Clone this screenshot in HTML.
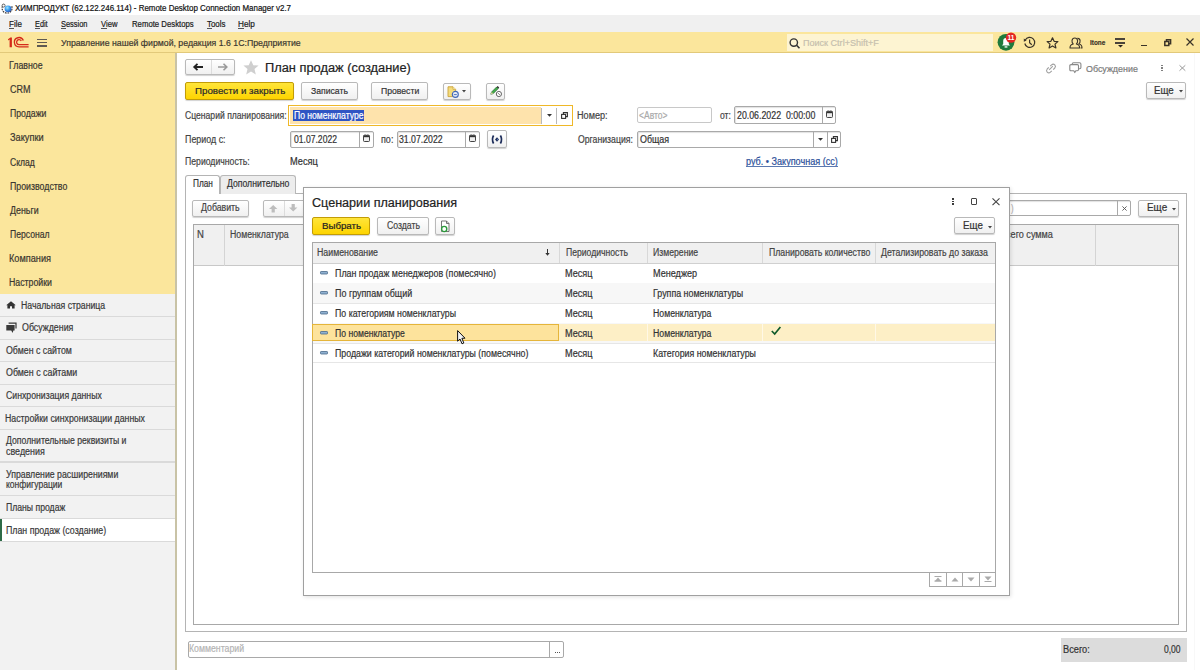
<!DOCTYPE html>
<html><head><meta charset="utf-8">
<style>
*{box-sizing:border-box;margin:0;padding:0}
html,body{width:1200px;height:670px;overflow:hidden;background:#fff;font-family:"Liberation Sans",sans-serif;color:#333}
.a{position:absolute;white-space:nowrap;transform-origin:0 0}
.tx{-webkit-text-stroke:0.2px currentColor;white-space:pre}
svg.a{overflow:visible}
</style></head><body>
<div class="a" style="left:0px;top:0px;width:1200px;height:15px;background:#fff"></div>
<svg class="a" style="left:1px;top:1.5px" width="12" height="12" viewBox="0 0 12 12"><defs><radialGradient id="gb" cx="0.4" cy="0.35" r="0.7"><stop offset="0" stop-color="#9ee8ff"/><stop offset="0.5" stop-color="#3a9ef0"/><stop offset="1" stop-color="#2b4fb8"/></radialGradient></defs><path d="M3 2.2 A5 5 0 1 0 10.6 4" fill="none" stroke="#3a3a3a" stroke-width="1.2" stroke-dasharray="1.6 0.9"/><circle cx="2.6" cy="3.6" r="1.5" fill="#fff" stroke="#444" stroke-width="0.8"/><circle cx="7" cy="6.8" r="3.4" fill="url(#gb)"/></svg>
<div class="a tx" style="left:15.00px;top:4.42px;font-size:8.6px;line-height:8.6px;color:#111;font-weight:400;transform:scaleX(0.9245);">ХИМПРОДУКТ (62.122.246.114) - Remote Desktop Connection Manager v2.7</div>
<div class="a" style="left:0px;top:15px;width:1200px;height:17px;background:#f0f0f0"></div>
<div class="a tx" style="left:9.40px;top:19.68px;font-size:9px;line-height:9px;color:#1a1a1a;font-weight:400;transform:scaleX(0.8929);">File</div>
<div class="a tx" style="left:35.00px;top:19.68px;font-size:9px;line-height:9px;color:#1a1a1a;font-weight:400;transform:scaleX(0.8125);">Edit</div>
<div class="a tx" style="left:61.00px;top:19.68px;font-size:9px;line-height:9px;color:#1a1a1a;font-weight:400;transform:scaleX(0.8281);">Session</div>
<div class="a tx" style="left:101.00px;top:19.68px;font-size:9px;line-height:9px;color:#1a1a1a;font-weight:400;transform:scaleX(0.8500);">View</div>
<div class="a tx" style="left:131.70px;top:19.68px;font-size:9px;line-height:9px;color:#1a1a1a;font-weight:400;transform:scaleX(0.8625);">Remote Desktops</div>
<div class="a tx" style="left:207.00px;top:19.68px;font-size:9px;line-height:9px;color:#1a1a1a;font-weight:400;transform:scaleX(0.8762);">Tools</div>
<div class="a tx" style="left:238.40px;top:19.68px;font-size:9px;line-height:9px;color:#1a1a1a;font-weight:400;transform:scaleX(0.9105);">Help</div>
<div class="a" style="left:9.4px;top:27.6px;width:4.5px;height:0.6999999999999993px;background:#555"></div>
<div class="a" style="left:35px;top:27.6px;width:4.5px;height:0.6999999999999993px;background:#555"></div>
<div class="a" style="left:61px;top:27.6px;width:4.799999999999997px;height:0.6999999999999993px;background:#555"></div>
<div class="a" style="left:101px;top:27.6px;width:5.799999999999997px;height:0.6999999999999993px;background:#555"></div>
<div class="a" style="left:207px;top:27.6px;width:5px;height:0.6999999999999993px;background:#555"></div>
<div class="a" style="left:238.4px;top:27.6px;width:5.5px;height:0.6999999999999993px;background:#555"></div>
<div class="a" style="left:0px;top:32px;width:1200px;height:19.5px;background:#fbe69c"></div>
<div class="a" style="left:0px;top:51.5px;width:1200px;height:1.5px;background:#e2c97a"></div>
<svg class="a" style="left:7px;top:36px" width="23" height="12" viewBox="0 0 23 12"><path d="M2.6 11.2 L2.6 3.4 L1.2 4.4 L1 3.2 L3.4 1.4 L4.9 1.4 L4.9 11.2 Z" fill="#d42a1a"/><path d="M16.3 4.6 A4.6 4.6 0 1 0 12 10.8 L21.6 10.8" fill="none" stroke="#d42a1a" stroke-width="1.35"/><path d="M14.3 5.0 A2.5 2.5 0 1 0 12 8.7 L21.6 8.7" fill="none" stroke="#d42a1a" stroke-width="1.25"/></svg>
<div class="a" style="left:37.3px;top:38.6px;width:9.700000000000003px;height:1.2999999999999972px;background:#5f5a52"></div>
<div class="a" style="left:37.3px;top:42.1px;width:9.700000000000003px;height:1.2999999999999972px;background:#5f5a52"></div>
<div class="a" style="left:37.3px;top:45.4px;width:9.700000000000003px;height:1.2999999999999972px;background:#5f5a52"></div>
<div class="a tx" style="left:60.80px;top:38.17px;font-size:9.6px;line-height:9.6px;color:#3a3630;font-weight:400;transform:scaleX(0.9106);">Управление нашей фирмой, редакция 1.6 1С:Предприятие</div>
<div class="a" style="left:787.3px;top:33.6px;width:205.5px;height:17.6px;background:#fdf4d2"></div>
<svg class="a" style="left:789px;top:37.5px" width="12" height="11" viewBox="0 0 12 11"><circle cx="4.8" cy="4.6" r="3.7" fill="none" stroke="#333" stroke-width="1.4"/><path d="M7.6 7.3 L10.5 10.2" stroke="#333" stroke-width="1.6"/></svg>
<div class="a tx" style="left:803.00px;top:38.26px;font-size:9.5px;line-height:9.5px;color:#c6bfae;font-weight:400;transform:scaleX(0.9519);">Поиск Ctrl+Shift+F</div>
<svg class="a" style="left:996px;top:32px" width="24" height="20" viewBox="0 0 24 20"><circle cx="10" cy="10.3" r="8.4" fill="#1f7a3c"/><path d="M6 13.5 L7.2 12 L7.2 9 Q7.2 6.2 10 6 Q12.8 6.2 12.8 9 L12.8 12 L14 13.5 Z" fill="#fff"/><rect x="8.6" y="14.3" width="2.8" height="1.3" fill="#fff"/><circle cx="15" cy="5.6" r="5.2" fill="#e32622"/><text x="15" y="7.9" font-family="Liberation Sans" font-weight="700" font-size="6.5" fill="#fff" text-anchor="middle">11</text></svg>
<svg class="a" style="left:1023px;top:36px" width="13" height="13" viewBox="0 0 13 13"><path d="M2.3 4 A5 5 0 1 1 1.8 7.5" fill="none" stroke="#3a3328" stroke-width="1.2"/><path d="M0.8 2.5 L3.6 4.6 L0.8 5.8 Z" fill="#3a3328"/><path d="M6.6 3.5 L6.6 6.8 L8.8 8.8" fill="none" stroke="#3a3328" stroke-width="1.2"/></svg>
<svg class="a" style="left:1046px;top:36.5px" width="13" height="12" viewBox="0 0 13 12"><path d="M6.5 0.8 L8.1 4.3 L11.9 4.6 L9 7.1 L9.9 10.9 L6.5 8.9 L3.1 10.9 L4 7.1 L1.1 4.6 L4.9 4.3 Z" fill="none" stroke="#3a3328" stroke-width="1.2" stroke-linejoin="round"/></svg>
<svg class="a" style="left:1069px;top:36.5px" width="14" height="12" viewBox="0 0 14 12"><path d="M1 11 Q1 7.5 4.2 7 Q2.8 5.6 3 3.6 Q3.4 1 5.8 1 Q8.2 1 8.6 3.6 Q8.8 5.6 7.4 7 Q10.6 7.5 10.6 11 Z" fill="none" stroke="#3a3328" stroke-width="1.1" stroke-linejoin="round"/><path d="M8.4 1.4 Q10.8 1.2 11.1 3.6 Q11.3 5.6 9.9 7 Q13 7.5 13 11 L11.6 11" fill="none" stroke="#3a3328" stroke-width="1.1" stroke-linejoin="round"/></svg>
<div class="a tx" style="left:1090.30px;top:39.45px;font-size:7.5px;line-height:7.5px;color:#3a3328;font-weight:700;transform:scaleX(0.8500);">Itone</div>
<div class="a" style="left:1115.2px;top:38.4px;width:10.099999999999909px;height:1.4000000000000057px;background:#4a443a"></div>
<div class="a" style="left:1115.2px;top:42.199999999999996px;width:10.099999999999909px;height:1.4000000000000057px;background:#4a443a"></div>
<svg class="a" style="left:1118px;top:45.3px" width="5" height="3" viewBox="0 0 5 3"><path d="M0 0 L5 0 L2.5 2.6 Z" fill="#2a2520"/></svg>
<div class="a" style="left:1140.6px;top:44.6px;width:6.2000000000000455px;height:1.3999999999999986px;background:#3a3328"></div>
<svg class="a" style="left:1163.8px;top:38.9px" width="7.4" height="7.2" viewBox="0 0 7.4 7.2"><rect x="0.8" y="2.5" width="4" height="4" fill="none" stroke="#3a3328" stroke-width="1.5"/><path d="M2.5 2.5 L2.5 0.8 L6.6 0.8 L6.6 4.8 L4.8 4.8" fill="none" stroke="#3a3328" stroke-width="1.5"/></svg>
<svg class="a" style="left:1186px;top:38.3px" width="8" height="8" viewBox="0 0 8 8"><path d="M0.5 0.5 L7.5 7.5 M7.5 0.5 L0.5 7.5" stroke="#3a3328" stroke-width="1.2"/></svg>
<div class="a" style="left:0px;top:53px;width:175px;height:240.5px;background:#fbe69c"></div>
<div class="a" style="left:0px;top:293.5px;width:175px;height:376.5px;background:#f2f2f2"></div>
<div class="a" style="left:175px;top:53px;width:2px;height:617px;background:#c9c3a6"></div>
<div class="a tx" style="left:9.22px;top:61.23px;font-size:10px;line-height:10px;color:#3a3630;font-weight:400;transform:scaleX(0.8811);">Главное</div>
<div class="a tx" style="left:10.10px;top:85.23px;font-size:10px;line-height:10px;color:#3a3630;font-weight:400;transform:scaleX(0.9000);">CRM</div>
<div class="a tx" style="left:10.10px;top:109.44px;font-size:10px;line-height:10px;color:#3a3630;font-weight:400;transform:scaleX(0.8714);">Продажи</div>
<div class="a tx" style="left:10.10px;top:133.44px;font-size:10px;line-height:10px;color:#3a3630;font-weight:400;transform:scaleX(0.9222);">Закупки</div>
<div class="a tx" style="left:10.10px;top:157.53px;font-size:10px;line-height:10px;color:#3a3630;font-weight:400;transform:scaleX(0.8586);">Склад</div>
<div class="a tx" style="left:10.10px;top:181.53px;font-size:10px;line-height:10px;color:#3a3630;font-weight:400;transform:scaleX(0.8785);">Производство</div>
<div class="a tx" style="left:10.10px;top:205.53px;font-size:10px;line-height:10px;color:#3a3630;font-weight:400;transform:scaleX(0.8844);">Деньги</div>
<div class="a tx" style="left:10.10px;top:229.53px;font-size:10px;line-height:10px;color:#3a3630;font-weight:400;transform:scaleX(0.8630);">Персонал</div>
<div class="a tx" style="left:9.18px;top:253.53px;font-size:10px;line-height:10px;color:#3a3630;font-weight:400;transform:scaleX(0.9182);">Компания</div>
<div class="a tx" style="left:9.22px;top:277.54px;font-size:10px;line-height:10px;color:#3a3630;font-weight:400;transform:scaleX(0.8771);">Настройки</div>
<div class="a" style="left:0px;top:315.7px;width:175px;height:1.1999999999999886px;background:#dadada"></div>
<div class="a" style="left:0px;top:339.0px;width:175px;height:1.1999999999999886px;background:#dadada"></div>
<div class="a" style="left:0px;top:360.7px;width:175px;height:1.1999999999999886px;background:#dadada"></div>
<div class="a" style="left:0px;top:384.2px;width:175px;height:1.1999999999999886px;background:#dadada"></div>
<div class="a" style="left:0px;top:406.0px;width:175px;height:1.1999999999999886px;background:#dadada"></div>
<div class="a" style="left:0px;top:428.8px;width:175px;height:1.1999999999999886px;background:#dadada"></div>
<div class="a" style="left:0px;top:461.4px;width:175px;height:1.1999999999999886px;background:#dadada"></div>
<div class="a" style="left:0px;top:495.3px;width:175px;height:1.1999999999999886px;background:#dadada"></div>
<div class="a" style="left:0px;top:518.2px;width:175px;height:1.2000000000000455px;background:#dadada"></div>
<div class="a" style="left:0px;top:540.7px;width:175px;height:1.2000000000000455px;background:#dadada"></div>
<div class="a" style="left:0px;top:519.3px;width:175px;height:21.40000000000009px;background:#fff"></div>
<div class="a" style="left:0px;top:519.3px;width:2px;height:21.40000000000009px;background:#2e6b48"></div>
<svg class="a" style="left:6.2px;top:300.6px" width="10" height="8" viewBox="0 0 10 8"><path d="M0.2 4.2 L5 0.2 L9.8 4.2 L8.6 4.2 L8.6 7.6 L6 7.6 L6 5.2 L4 5.2 L4 7.6 L1.4 7.6 L1.4 4.2 Z" fill="#333"/></svg>
<svg class="a" style="left:6px;top:321.5px" width="11" height="12" viewBox="0 0 11 12"><path d="M2.6 0.6 L10.6 0.6 L10.6 6.6 L9.4 6.6 L9.4 1.8 L2.6 1.8 Z" fill="#3a3a3a"/><path d="M0.3 3.0 L8.6 3.0 L8.6 8.4 L7.4 8.4 L6.6 11.0 L5.2 8.4 L0.3 8.4 Z" fill="#3a3a3a"/></svg>
<div class="a tx" style="left:21.33px;top:301.24px;font-size:10px;line-height:10px;color:#3a3a3a;font-weight:400;transform:scaleX(0.8698);">Начальная страница</div>
<div class="a tx" style="left:22.20px;top:323.24px;font-size:10px;line-height:10px;color:#3a3a3a;font-weight:400;transform:scaleX(0.8845);">Обсуждения</div>
<div class="a tx" style="left:6.30px;top:345.74px;font-size:10px;line-height:10px;color:#3a3a3a;font-weight:400;transform:scaleX(0.8800);">Обмен с сайтом</div>
<div class="a tx" style="left:6.30px;top:368.24px;font-size:10px;line-height:10px;color:#3a3a3a;font-weight:400;transform:scaleX(0.8863);">Обмен с сайтами</div>
<div class="a tx" style="left:6.30px;top:391.04px;font-size:10px;line-height:10px;color:#3a3a3a;font-weight:400;transform:scaleX(0.8718);">Синхронизация данных</div>
<div class="a tx" style="left:5.42px;top:413.54px;font-size:10px;line-height:10px;color:#3a3a3a;font-weight:400;transform:scaleX(0.8767);">Настройки синхронизации данных</div>
<div class="a tx" style="left:6.30px;top:436.34px;font-size:10px;line-height:10px;color:#3a3a3a;font-weight:400;transform:scaleX(0.8688);">Дополнительные реквизиты и</div>
<div class="a tx" style="left:6.30px;top:446.64px;font-size:10px;line-height:10px;color:#3a3a3a;font-weight:400;transform:scaleX(0.8930);">сведения</div>
<div class="a tx" style="left:6.30px;top:469.84px;font-size:10px;line-height:10px;color:#3a3a3a;font-weight:400;transform:scaleX(0.8758);">Управление расширениями</div>
<div class="a tx" style="left:6.30px;top:480.34px;font-size:10px;line-height:10px;color:#3a3a3a;font-weight:400;transform:scaleX(0.8545);">конфигурации</div>
<div class="a tx" style="left:6.30px;top:502.84px;font-size:10px;line-height:10px;color:#3a3a3a;font-weight:400;transform:scaleX(0.8652);">Планы продаж</div>
<div class="a tx" style="left:6.30px;top:525.74px;font-size:10px;line-height:10px;color:#3a3a3a;font-weight:400;transform:scaleX(0.8807);">План продаж (создание)</div>
<div class="a" style="left:184.8px;top:59.2px;width:49.79999999999998px;height:15.599999999999994px;border:1px solid #b9b9b9;border-radius:2px;background:linear-gradient(#ffffff,#f0f0f0);box-shadow:0 1px 1px rgba(0,0,0,.18)"></div>
<div class="a" style="left:211px;top:60px;width:1px;height:14px;background:#dcdcdc"></div>
<svg class="a" style="left:193px;top:63px" width="11" height="8" viewBox="0 0 11 8"><path d="M10 4 L1.5 4 M4.5 0.8 L1.2 4 L4.5 7.2" fill="none" stroke="#222" stroke-width="1.8"/></svg>
<svg class="a" style="left:217px;top:63px" width="11" height="8" viewBox="0 0 11 8"><path d="M1 4 L9.5 4 M6.5 0.8 L9.8 4 L6.5 7.2" fill="none" stroke="#9a9a9a" stroke-width="1.6"/></svg>
<svg class="a" style="left:242.5px;top:59.5px" width="16" height="15" viewBox="0 0 16 15"><path d="M8 0.3 L10.3 5.2 L15.6 5.6 L11.5 9 L12.8 14.6 L8 11.6 L3.2 14.6 L4.5 9 L0.4 5.6 L5.7 5.2 Z" fill="#cfcfcf"/></svg>
<div class="a tx" style="left:265.17px;top:61.52px;font-size:12.5px;line-height:12.5px;color:#222;font-weight:400;transform:scaleX(1.0262);">План продаж (создание)</div>
<svg class="a" style="left:1045px;top:62.5px" width="12" height="11" viewBox="0 0 12 11"><path d="M5.2 3.2 L6.6 1.8 Q8.2 0.4 9.8 1.8 Q11.2 3.4 9.8 5 L8.2 6.6 M6.8 7.8 L5.4 9.2 Q3.8 10.6 2.2 9.2 Q0.8 7.6 2.2 6 L3.8 4.4 M4.2 6.8 L7.8 3.2" fill="none" stroke="#a0a0a0" stroke-width="1.1"/></svg>
<svg class="a" style="left:1068.5px;top:62px" width="13" height="12" viewBox="0 0 13 12"><path d="M3.2 2.6 L3.2 2 Q3.2 0.7 4.5 0.7 L10.6 0.7 Q11.9 0.7 11.9 2 L11.9 5.6 Q11.9 6.8 10.7 6.8 L9.6 6.8" fill="none" stroke="#888" stroke-width="1.1"/><path d="M2 2.6 L8.3 2.6 Q9.5 2.6 9.5 3.8 L9.5 7.6 Q9.5 8.8 8.3 8.8 L6.8 8.8 L5.8 10.6 L4.8 8.8 L2 8.8 Q0.8 8.8 0.8 7.6 L0.8 3.8 Q0.8 2.6 2 2.6 Z" fill="#fff" stroke="#888" stroke-width="1.1" stroke-linejoin="round"/></svg>
<div class="a tx" style="left:1085.50px;top:63.76px;font-size:9.5px;line-height:9.5px;color:#7a7a7a;font-weight:400;transform:scaleX(0.9364);">Обсуждение</div>
<div class="a" style="left:1161px;top:64.5px;width:1.5px;height:1.4000000000000057px;background:#808080"></div>
<div class="a" style="left:1161px;top:67.3px;width:1.5px;height:1.4000000000000057px;background:#808080"></div>
<div class="a" style="left:1161px;top:70.1px;width:1.5px;height:1.4000000000000057px;background:#808080"></div>
<svg class="a" style="left:1179px;top:65.3px" width="7" height="6" viewBox="0 0 7 6"><path d="M0.5 0.3 L6.3 5.7 M6.3 0.3 L0.5 5.7" stroke="#999" stroke-width="1"/></svg>
<div class="a" style="left:1145.9px;top:82.2px;width:40.59999999999991px;height:17.299999999999997px;border:1px solid #b9b9b9;border-radius:2px;background:linear-gradient(#ffffff,#f0f0f0);box-shadow:0 1px 1px rgba(0,0,0,.18)"></div>
<div class="a tx" style="left:1154.43px;top:86.33px;font-size:10px;line-height:10px;color:#333;font-weight:400;transform:scaleX(0.9684);">Еще</div>
<svg class="a" style="left:1178.5px;top:90px" width="4" height="3" viewBox="0 0 4 3"><path d="M0 0 L4 0 L2 2.5 Z" fill="#444"/></svg>
<div class="a" style="left:184.8px;top:82.3px;width:109.39999999999998px;height:17.400000000000006px;border:1px solid #c29c06;border-radius:2px;background:linear-gradient(#ffe53a,#fdd400);box-shadow:0 1px 1px rgba(0,0,0,.18)"></div>
<div class="a tx" style="left:194.70px;top:85.76px;font-size:9.5px;line-height:9.5px;color:#2a2a2a;font-weight:400;transform:scaleX(1.0273);">Провести и закрыть</div>
<div class="a" style="left:301.3px;top:82.3px;width:56.39999999999998px;height:17.400000000000006px;border:1px solid #b9b9b9;border-radius:2px;background:linear-gradient(#ffffff,#f0f0f0);box-shadow:0 1px 1px rgba(0,0,0,.18)"></div>
<div class="a tx" style="left:310.70px;top:85.76px;font-size:9.5px;line-height:9.5px;color:#333;font-weight:400;transform:scaleX(0.9098);">Записать</div>
<div class="a" style="left:371.1px;top:82.3px;width:57.39999999999998px;height:17.400000000000006px;border:1px solid #b9b9b9;border-radius:2px;background:linear-gradient(#ffffff,#f0f0f0);box-shadow:0 1px 1px rgba(0,0,0,.18)"></div>
<div class="a tx" style="left:380.60px;top:85.76px;font-size:9.5px;line-height:9.5px;color:#333;font-weight:400;transform:scaleX(0.9095);">Провести</div>
<div class="a" style="left:442.5px;top:82.5px;width:28.0px;height:17.200000000000003px;border:1px solid #b9b9b9;border-radius:2px;background:linear-gradient(#ffffff,#f0f0f0);box-shadow:0 1px 1px rgba(0,0,0,.18)"></div>
<svg class="a" style="left:447px;top:85.5px" width="13" height="12" viewBox="0 0 13 12"><path d="M1 0.8 L6 0.8 L8.6 3.4 L8.6 10.6 L1 10.6 Z" fill="#f4dc7c" stroke="#c9a23a" stroke-width=".9"/><path d="M6 0.8 L6 3.4 L8.6 3.4" fill="#fff3c0" stroke="#c9a23a" stroke-width=".7"/><circle cx="8.3" cy="8.4" r="3.0" fill="#e8eef8" stroke="#3f67b8" stroke-width="1.1"/><path d="M6.8 8.6 L9.8 8.6" stroke="#3f67b8" stroke-width=".9"/></svg>
<svg class="a" style="left:462px;top:90px" width="4" height="3" viewBox="0 0 4 3"><path d="M0 0 L4 0 L2 2.5 Z" fill="#444"/></svg>
<div class="a" style="left:485.5px;top:82.5px;width:19.69999999999999px;height:17.200000000000003px;border:1px solid #b9b9b9;border-radius:2px;background:linear-gradient(#ffffff,#f0f0f0);box-shadow:0 1px 1px rgba(0,0,0,.18)"></div>
<svg class="a" style="left:489.5px;top:85px" width="13" height="13" viewBox="0 0 13 13"><path d="M0.8 9.2 L1.6 7 L6.6 2 L8.2 3.6 L3.2 8.6 Z" fill="#3fae4a" stroke="#1f5f28" stroke-width=".7"/><path d="M6.6 2 L7.6 1 L9.2 2.6 L8.2 3.6 Z" fill="#2a2a2a"/><path d="M0.8 9.2 L1.6 7 L3.2 8.6 Z" fill="#e8d8a0"/><circle cx="8.9" cy="9.0" r="2.6" fill="#fff" stroke="#555" stroke-width=".9"/><path d="M8 8.1 L9.8 9.9" stroke="#555" stroke-width=".8"/></svg>
<div class="a tx" style="left:184.70px;top:110.73px;font-size:10px;line-height:10px;color:#444;font-weight:400;transform:scaleX(0.8602);">Сценарий планирования:</div>
<div class="a" style="left:288.3px;top:105px;width:284.7px;height:20.799999999999997px;border:1.6px solid #efb828;background:#fff"></div>
<div class="a" style="left:289.9px;top:106.6px;width:251.30000000000007px;height:17.60000000000001px;background:#fee3ac"></div>
<div class="a" style="left:541px;top:107.5px;width:1.2999999999999545px;height:16.0px;background:#b8b8b8"></div>
<div class="a" style="left:555.8px;top:107.5px;width:1.3000000000000682px;height:16.0px;background:#b8b8b8"></div>
<svg class="a" style="left:546.8px;top:113.8px" width="5" height="3" viewBox="0 0 5 3"><path d="M0 0 L5 0 L2.5 2.8 Z" fill="#333"/></svg>
<svg class="a" style="left:560.5px;top:111.6px" width="7" height="7" viewBox="0 0 7 7"><rect x="0.6" y="2.4" width="4" height="4" fill="none" stroke="#333" stroke-width="1.1"/><path d="M2.4 2.4 L2.4 0.6 L6.4 0.6 L6.4 4.6 L4.6 4.6" fill="none" stroke="#333" stroke-width="1.1"/></svg>
<div class="a" style="left:293.3px;top:110px;width:70.89999999999998px;height:10.799999999999997px;background:#2f55c4"></div>
<div class="a tx" style="left:294.00px;top:110.63px;font-size:10px;line-height:10px;color:#fff;font-weight:400;transform:scaleX(0.8580);">По номенклатуре</div>
<div class="a tx" style="left:576.59px;top:110.73px;font-size:10px;line-height:10px;color:#444;font-weight:400;transform:scaleX(0.9125);">Номер:</div>
<div class="a" style="left:637.2px;top:106.7px;width:75.29999999999995px;height:16.599999999999994px;border:1px solid #c8c8c8;border-radius:2px;background:#fff"></div>
<div class="a tx" style="left:639.00px;top:110.63px;font-size:10px;line-height:10px;color:#aaa;font-weight:400;transform:scaleX(0.8529);">&lt;Авто&gt;</div>
<div class="a tx" style="left:719.70px;top:110.73px;font-size:10px;line-height:10px;color:#444;font-weight:400;transform:scaleX(0.8583);">от:</div>
<div class="a" style="left:734px;top:106.4px;width:102.29999999999995px;height:17.599999999999994px;border:1px solid #a9a9a9;border-radius:2px;background:#fff;box-shadow:inset 1px 1px 1px rgba(0,0,0,.12)"></div>
<div class="a" style="left:821.8px;top:107px;width:1.0px;height:16px;background:#a9a9a9"></div>
<div class="a tx" style="left:736.70px;top:110.73px;font-size:10px;line-height:10px;color:#333;font-weight:400;transform:scaleX(0.8798);">20.06.2022  0:00:00</div>
<svg class="a" style="left:826px;top:110.3px" width="7" height="8" viewBox="0 0 7 8"><rect x="0.5" y="1.3" width="6" height="6.2" rx="0.9" fill="#eeeeee" stroke="#3a3a3a" stroke-width="0.95"/><rect x="0.6" y="1.3" width="5.8" height="1.9" fill="#333"/><rect x="1.7" y="0.3" width="0.9" height="1.3" fill="#666"/><rect x="4.4" y="0.3" width="0.9" height="1.3" fill="#666"/></svg>
<div class="a tx" style="left:185.00px;top:134.63px;font-size:10px;line-height:10px;color:#444;font-weight:400;transform:scaleX(0.8889);">Период с:</div>
<div class="a" style="left:290.3px;top:131.3px;width:83.39999999999998px;height:16.899999999999977px;border:1px solid #a9a9a9;border-radius:2px;background:#fff;box-shadow:inset 1px 1px 1px rgba(0,0,0,.12)"></div>
<div class="a" style="left:359.2px;top:132px;width:1.0px;height:15px;background:#a9a9a9"></div>
<div class="a tx" style="left:293.80px;top:134.63px;font-size:10px;line-height:10px;color:#333;font-weight:400;transform:scaleX(0.8580);">01.07.2022</div>
<svg class="a" style="left:363.1px;top:134.3px" width="7" height="8" viewBox="0 0 7 8"><rect x="0.5" y="1.3" width="6" height="6.2" rx="0.9" fill="#eeeeee" stroke="#3a3a3a" stroke-width="0.95"/><rect x="0.6" y="1.3" width="5.8" height="1.9" fill="#333"/><rect x="1.7" y="0.3" width="0.9" height="1.3" fill="#666"/><rect x="4.4" y="0.3" width="0.9" height="1.3" fill="#666"/></svg>
<div class="a tx" style="left:380.80px;top:134.63px;font-size:10px;line-height:10px;color:#444;font-weight:400;transform:scaleX(0.9000);">по:</div>
<div class="a" style="left:397px;top:131.3px;width:82.5px;height:16.899999999999977px;border:1px solid #a9a9a9;border-radius:2px;background:#fff;box-shadow:inset 1px 1px 1px rgba(0,0,0,.12)"></div>
<div class="a" style="left:465px;top:132px;width:1px;height:15px;background:#a9a9a9"></div>
<div class="a tx" style="left:399.20px;top:134.63px;font-size:10px;line-height:10px;color:#333;font-weight:400;transform:scaleX(0.8720);">31.07.2022</div>
<svg class="a" style="left:469.3px;top:134.3px" width="7" height="8" viewBox="0 0 7 8"><rect x="0.5" y="1.3" width="6" height="6.2" rx="0.9" fill="#eeeeee" stroke="#3a3a3a" stroke-width="0.95"/><rect x="0.6" y="1.3" width="5.8" height="1.9" fill="#333"/><rect x="1.7" y="0.3" width="0.9" height="1.3" fill="#666"/><rect x="4.4" y="0.3" width="0.9" height="1.3" fill="#666"/></svg>
<div class="a" style="left:487.2px;top:130.3px;width:20.0px;height:17.69999999999999px;border:1px solid #b9b9b9;border-radius:2px;background:linear-gradient(#ffffff,#f0f0f0);box-shadow:0 1px 1px rgba(0,0,0,.18)"></div>
<svg class="a" style="left:491px;top:134.5px" width="12" height="9" viewBox="0 0 12 9"><path d="M2.6 0.5 Q0.3 4.5 2.6 8.5 M9.4 0.5 Q11.7 4.5 9.4 8.5" fill="none" stroke="#1d2d5a" stroke-width="1.7"/><path d="M6 2.2 L8 4.5 L6 6.8 L4 4.5 Z" fill="#1d2d5a"/><path d="M6 3.4 L6.9 4.5 L6 5.6 Z" fill="#7aa0e0"/></svg>
<div class="a tx" style="left:578.20px;top:134.63px;font-size:10px;line-height:10px;color:#444;font-weight:400;transform:scaleX(0.8698);">Организация:</div>
<div class="a" style="left:637.2px;top:130.8px;width:204.0999999999999px;height:17.399999999999977px;border:1px solid #a9a9a9;border-radius:2px;background:#fff;box-shadow:inset 1px 1px 1px rgba(0,0,0,.12)"></div>
<div class="a" style="left:812.6px;top:131.5px;width:1.0px;height:15.5px;background:#a9a9a9"></div>
<div class="a" style="left:826.9px;top:131.5px;width:1.0px;height:15.5px;background:#a9a9a9"></div>
<div class="a tx" style="left:639.50px;top:134.63px;font-size:10px;line-height:10px;color:#333;font-weight:400;transform:scaleX(0.8906);">Общая</div>
<svg class="a" style="left:817.8px;top:137.8px" width="5" height="3" viewBox="0 0 5 3"><path d="M0 0 L5 0 L2.5 2.8 Z" fill="#333"/></svg>
<svg class="a" style="left:831px;top:135.5px" width="7" height="7" viewBox="0 0 7 7"><rect x="0.6" y="2.4" width="4" height="4" fill="none" stroke="#333" stroke-width="1.1"/><path d="M2.4 2.4 L2.4 0.6 L6.4 0.6 L6.4 4.6 L4.6 4.6" fill="none" stroke="#333" stroke-width="1.1"/></svg>
<div class="a tx" style="left:185.00px;top:157.13px;font-size:10px;line-height:10px;color:#444;font-weight:400;transform:scaleX(0.8676);">Периодичность:</div>
<div class="a tx" style="left:289.88px;top:157.13px;font-size:10px;line-height:10px;color:#333;font-weight:400;transform:scaleX(0.9207);">Месяц</div>
<div class="a tx" style="left:746.20px;top:157.13px;font-size:10px;line-height:10px;color:#2b4f9a;font-weight:400;transform:scaleX(0.9079);">руб. • Закупочная (сс)</div>
<div class="a" style="left:746.2px;top:166.3px;width:91.69999999999993px;height:0.799999999999983px;background:#5a78b0"></div>
<div class="a" style="left:185.3px;top:193px;width:1001.5px;height:438.6px;border:1px solid #b4b4b4;background:#fff"></div>
<div class="a" style="left:220.3px;top:175px;width:76.19999999999999px;height:18.5px;border:1px solid #b8b8b8;border-bottom:none;border-radius:3px 3px 0 0;background:#ededed"></div>
<div class="a" style="left:185.3px;top:174.7px;width:34.69999999999999px;height:19.5px;border:1px solid #b4b4b4;border-bottom:none;border-radius:3px 3px 0 0;background:#fff"></div>
<div class="a tx" style="left:192.60px;top:179.13px;font-size:10px;line-height:10px;color:#333;font-weight:400;transform:scaleX(0.8250);">План</div>
<div class="a tx" style="left:226.70px;top:179.13px;font-size:10px;line-height:10px;color:#333;font-weight:400;transform:scaleX(0.8667);">Дополнительно</div>
<div class="a" style="left:192.3px;top:199.8px;width:57.099999999999994px;height:16.899999999999977px;border:1px solid #b9b9b9;border-radius:2px;background:linear-gradient(#ffffff,#f0f0f0);box-shadow:0 1px 1px rgba(0,0,0,.18)"></div>
<div class="a tx" style="left:201.00px;top:203.44px;font-size:10px;line-height:10px;color:#444;font-weight:400;transform:scaleX(0.8750);">Добавить</div>
<div class="a" style="left:263.4px;top:199.8px;width:46.60000000000002px;height:16.899999999999977px;border:1px solid #b9b9b9;border-radius:2px;background:linear-gradient(#ffffff,#f0f0f0);box-shadow:0 1px 1px rgba(0,0,0,.18)"></div>
<div class="a" style="left:284.2px;top:200.5px;width:1.0px;height:15.5px;background:#dcdcdc"></div>
<svg class="a" style="left:269.3px;top:204.5px" width="8.4" height="7.4" viewBox="0 0 8.4 7.4"><path d="M4.2 0 L8.4 4 L5.8 4 L5.8 7.4 L2.6 7.4 L2.6 4 L0 4 Z" fill="#bdbdbd"/></svg>
<svg class="a" style="left:289.2px;top:204.2px" width="8.4" height="7.4" viewBox="0 0 8.4 7.4"><path d="M4.2 7.4 L8.4 3.4 L5.8 3.4 L5.8 0 L2.6 0 L2.6 3.4 L0 3.4 Z" fill="#bdbdbd"/></svg>
<div class="a" style="left:960px;top:200.3px;width:171.29999999999995px;height:16.0px;border:1px solid #a9a9a9;border-radius:2px;background:#fff;box-shadow:inset 1px 1px 1px rgba(0,0,0,.12)"></div>
<div class="a" style="left:1116.7px;top:201px;width:1.0px;height:15px;background:#a9a9a9"></div>
<div class="a tx" style="left:1011.20px;top:203.63px;font-size:10px;line-height:10px;color:#b0b0b0;font-weight:400;transform:scaleX(0.7667);">)</div>
<svg class="a" style="left:1122px;top:205.5px" width="5" height="5" viewBox="0 0 5 5"><path d="M0.4 0.4 L4.6 4.6 M4.6 0.4 L0.4 4.6" stroke="#555" stroke-width=".9"/></svg>
<div class="a" style="left:1138.3px;top:199.5px;width:41.200000000000045px;height:17.19999999999999px;border:1px solid #b9b9b9;border-radius:2px;background:linear-gradient(#ffffff,#f0f0f0);box-shadow:0 1px 1px rgba(0,0,0,.18)"></div>
<div class="a tx" style="left:1146.51px;top:203.34px;font-size:10px;line-height:10px;color:#333;font-weight:400;transform:scaleX(0.9895);">Еще</div>
<svg class="a" style="left:1171.5px;top:207.5px" width="4" height="3" viewBox="0 0 4 3"><path d="M0 0 L4 0 L2 2.5 Z" fill="#444"/></svg>
<div class="a" style="left:192.6px;top:223.6px;width:986.9px;height:401.19999999999993px;border:1px solid #a8a8a8;background:#fff"></div>
<div class="a" style="left:193.6px;top:224.6px;width:984.9px;height:41.400000000000006px;background:#f0f0f0;border-bottom:1px solid #c8c8c8"></div>
<div class="a" style="left:224.2px;top:224.6px;width:1.0px;height:41.400000000000006px;background:#d4d4d4"></div>
<div class="a" style="left:1094.8px;top:224.6px;width:1.0px;height:41.400000000000006px;background:#d4d4d4"></div>
<div class="a tx" style="left:197.35px;top:230.23px;font-size:10px;line-height:10px;color:#444;font-weight:400;transform:scaleX(0.9500);">N</div>
<div class="a tx" style="left:229.83px;top:230.23px;font-size:10px;line-height:10px;color:#444;font-weight:400;transform:scaleX(0.8742);">Номенклатура</div>
<div class="a tx" style="left:1000.09px;top:229.63px;font-size:10px;line-height:10px;color:#444;font-weight:400;transform:scaleX(0.9086);">Всего сумма</div>
<div class="a" style="left:187.9px;top:641.3px;width:375.80000000000007px;height:17.100000000000023px;border:1px solid #a9a9a9;border-radius:2px;background:#fff"></div>
<div class="a" style="left:549px;top:642px;width:1px;height:16px;background:#a9a9a9"></div>
<div class="a" style="left:554.5px;top:651.6px;width:1.0px;height:1.1000000000000227px;background:#555"></div>
<div class="a" style="left:556.6px;top:651.6px;width:1.0px;height:1.1000000000000227px;background:#555"></div>
<div class="a" style="left:558.7px;top:651.6px;width:1.0px;height:1.1000000000000227px;background:#555"></div>
<div class="a tx" style="left:189.33px;top:644.13px;font-size:10px;line-height:10px;color:#b4b4b4;font-weight:400;transform:scaleX(0.8742);">Комментарий</div>
<div class="a" style="left:1061px;top:638.1px;width:125.90000000000009px;height:23.899999999999977px;background:#dcdcdc"></div>
<div class="a tx" style="left:1063.48px;top:644.83px;font-size:10px;line-height:10px;color:#333;font-weight:400;transform:scaleX(0.9250);">Всего:</div>
<div class="a tx" style="left:1164.00px;top:644.83px;font-size:10px;line-height:10px;color:#333;font-weight:400;transform:scaleX(0.8500);">0,00</div>
<div class="a" style="left:1193.5px;top:53px;width:1.0px;height:617px;background:#f8f8f8"></div>
<div class="a" style="left:303px;top:187px;width:706.5px;height:409px;border:1px solid #a0a0a0;border-right-width:1.5px;border-bottom-width:1.5px;background:#fff;box-shadow:1px 1px 4px rgba(0,0,0,.12)"></div>
<div class="a tx" style="left:312.30px;top:196.64px;font-size:12px;line-height:12px;color:#222;font-weight:400;transform:scaleX(1.0486);">Сценарии планирования</div>
<div class="a" style="left:952.3px;top:198.0px;width:1.8000000000000682px;height:1.8000000000000114px;background:#3a3a3a"></div>
<div class="a" style="left:952.3px;top:200.6px;width:1.8000000000000682px;height:1.8000000000000114px;background:#3a3a3a"></div>
<div class="a" style="left:952.3px;top:203.2px;width:1.8000000000000682px;height:1.8000000000000114px;background:#3a3a3a"></div>
<div class="a" style="left:970.8px;top:198.3px;width:6.7000000000000455px;height:6.399999999999977px;border:1.2px solid #444;border-radius:1px"></div>
<svg class="a" style="left:991.5px;top:197.8px" width="8" height="7.5" viewBox="0 0 8 7.5"><path d="M0.5 0.3 L7.5 7.2 M7.5 0.3 L0.5 7.2" stroke="#444" stroke-width="1.1"/></svg>
<div class="a" style="left:312.1px;top:217px;width:58.299999999999955px;height:17.69999999999999px;border:1px solid #c29c06;border-radius:2px;background:linear-gradient(#ffe53a,#fdd400);box-shadow:0 1px 1px rgba(0,0,0,.18)"></div>
<div class="a tx" style="left:321.60px;top:220.87px;font-size:9.6px;line-height:9.6px;color:#222;font-weight:400;transform:scaleX(1.0103);">Выбрать</div>
<div class="a" style="left:377.3px;top:217px;width:51.69999999999999px;height:17.69999999999999px;border:1px solid #b9b9b9;border-radius:2px;background:linear-gradient(#ffffff,#f0f0f0);box-shadow:0 1px 1px rgba(0,0,0,.18)"></div>
<div class="a tx" style="left:386.50px;top:221.34px;font-size:10px;line-height:10px;color:#444;font-weight:400;transform:scaleX(0.8684);">Создать</div>
<div class="a" style="left:435.4px;top:217px;width:20.0px;height:17.69999999999999px;border:1px solid #b9b9b9;border-radius:2px;background:linear-gradient(#ffffff,#f0f0f0);box-shadow:0 1px 1px rgba(0,0,0,.18)"></div>
<svg class="a" style="left:439.5px;top:219.5px" width="12" height="13" viewBox="0 0 12 13"><path d="M1.5 1 L6.5 1 L9 3.5 L9 11.5 L1.5 11.5 Z" fill="#fff" stroke="#666" stroke-width=".9"/><path d="M6.5 1 L6.5 3.5 L9 3.5" fill="none" stroke="#666" stroke-width=".9"/><circle cx="4.2" cy="9" r="2.6" fill="#fff" stroke="#2a9a3a" stroke-width="1.4"/></svg>
<div class="a" style="left:954.4px;top:216.8px;width:40.80000000000007px;height:17.5px;border:1px solid #b9b9b9;border-radius:2px;background:linear-gradient(#ffffff,#f0f0f0);box-shadow:0 1px 1px rgba(0,0,0,.18)"></div>
<div class="a tx" style="left:962.93px;top:221.44px;font-size:10px;line-height:10px;color:#333;font-weight:400;transform:scaleX(0.9737);">Еще</div>
<svg class="a" style="left:987.5px;top:225.5px" width="4" height="3" viewBox="0 0 4 3"><path d="M0 0 L4 0 L2 2.5 Z" fill="#444"/></svg>
<div class="a" style="left:311.8px;top:241.5px;width:683.8px;height:331.5px;border:1px solid #a8a8a8;background:#fff"></div>
<div class="a" style="left:312.8px;top:242.5px;width:681.8px;height:21.100000000000023px;background:#f0f0f0;border-bottom:1px solid #d0d0d0"></div>
<div class="a" style="left:559.3px;top:242.5px;width:1.2000000000000455px;height:20.0px;background:#d8d8d8"></div>
<div class="a" style="left:647.2px;top:242.5px;width:1.2000000000000455px;height:20.0px;background:#d8d8d8"></div>
<div class="a" style="left:762.2px;top:242.5px;width:1.2000000000000455px;height:20.0px;background:#d8d8d8"></div>
<div class="a" style="left:874.7px;top:242.5px;width:1.2000000000000455px;height:20.0px;background:#d8d8d8"></div>
<div class="a tx" style="left:317.12px;top:247.53px;font-size:10px;line-height:10px;color:#444;font-weight:400;transform:scaleX(0.8794);">Наименование</div>
<svg class="a" style="left:545px;top:249px" width="5" height="7" viewBox="0 0 5 7"><path d="M2.5 0 L2.5 5.5" stroke="#333" stroke-width="1"/><path d="M0.3 4 L2.5 6.8 L4.7 4 Z" fill="#333"/></svg>
<div class="a tx" style="left:565.80px;top:247.53px;font-size:10px;line-height:10px;color:#444;font-weight:400;transform:scaleX(0.8625);">Периодичность</div>
<div class="a tx" style="left:653.13px;top:247.53px;font-size:10px;line-height:10px;color:#444;font-weight:400;transform:scaleX(0.8686);">Измерение</div>
<div class="a tx" style="left:768.75px;top:247.53px;font-size:10px;line-height:10px;color:#444;font-weight:400;transform:scaleX(0.8711);">Планировать количество</div>
<div class="a tx" style="left:881.25px;top:247.53px;font-size:10px;line-height:10px;color:#444;font-weight:400;transform:scaleX(0.8740);">Детализировать до заказа</div>
<div class="a" style="left:312.8px;top:282.79999999999995px;width:681.8px;height:0.8000000000000114px;background:#e6e6e6"></div>
<svg class="a" style="left:319.8px;top:270.90px" width="8" height="3.5" viewBox="0 0 8 3.5"><rect x="0.5" y="0.5" width="7" height="2.5" rx="0.6" fill="#8fb0d0" stroke="#4a6a8a" stroke-width="0.8"/></svg>
<div class="a tx" style="left:334.60px;top:268.94px;font-size:10px;line-height:10px;color:#333;font-weight:400;transform:scaleX(0.8873);">План продаж менеджеров (помесячно)</div>
<div class="a tx" style="left:565.19px;top:268.94px;font-size:10px;line-height:10px;color:#333;font-weight:400;transform:scaleX(0.9138);">Месяц</div>
<div class="a tx" style="left:653.09px;top:268.94px;font-size:10px;line-height:10px;color:#333;font-weight:400;transform:scaleX(0.9085);">Менеджер</div>
<div class="a" style="left:312.8px;top:283.29999999999995px;width:681.8px;height:19.899999999999977px;background:#f7f7f7"></div>
<div class="a" style="left:312.8px;top:302.69999999999993px;width:681.8px;height:0.8000000000000114px;background:#e6e6e6"></div>
<svg class="a" style="left:319.8px;top:290.80px" width="8" height="3.5" viewBox="0 0 8 3.5"><rect x="0.5" y="0.5" width="7" height="2.5" rx="0.6" fill="#8fb0d0" stroke="#4a6a8a" stroke-width="0.8"/></svg>
<div class="a tx" style="left:334.60px;top:288.83px;font-size:10px;line-height:10px;color:#333;font-weight:400;transform:scaleX(0.8942);">По группам общий</div>
<div class="a tx" style="left:565.19px;top:288.83px;font-size:10px;line-height:10px;color:#333;font-weight:400;transform:scaleX(0.9138);">Месяц</div>
<div class="a tx" style="left:653.11px;top:288.83px;font-size:10px;line-height:10px;color:#333;font-weight:400;transform:scaleX(0.8880);">Группа номенклатуры</div>
<div class="a" style="left:312.8px;top:322.59999999999997px;width:681.8px;height:0.8000000000000114px;background:#e6e6e6"></div>
<svg class="a" style="left:319.8px;top:310.70px" width="8" height="3.5" viewBox="0 0 8 3.5"><rect x="0.5" y="0.5" width="7" height="2.5" rx="0.6" fill="#8fb0d0" stroke="#4a6a8a" stroke-width="0.8"/></svg>
<div class="a tx" style="left:334.60px;top:308.74px;font-size:10px;line-height:10px;color:#333;font-weight:400;transform:scaleX(0.8781);">По категориям номенклатуры</div>
<div class="a tx" style="left:565.19px;top:308.74px;font-size:10px;line-height:10px;color:#333;font-weight:400;transform:scaleX(0.9138);">Месяц</div>
<div class="a tx" style="left:653.13px;top:308.74px;font-size:10px;line-height:10px;color:#333;font-weight:400;transform:scaleX(0.8712);">Номенклатура</div>
<div class="a" style="left:312.8px;top:323.09999999999997px;width:681.8px;height:19.899999999999977px;background:#f7f7f7"></div>
<div class="a" style="left:312.8px;top:323.8px;width:681.8px;height:17.19999999999999px;background:#fdefc6"></div>
<div class="a" style="left:647.2px;top:323.8px;width:1.0px;height:17.19999999999999px;background:#fff8e6"></div>
<div class="a" style="left:762.2px;top:323.8px;width:1.0px;height:17.19999999999999px;background:#fff8e6"></div>
<div class="a" style="left:874.7px;top:323.8px;width:1.0px;height:17.19999999999999px;background:#fff8e6"></div>
<div class="a" style="left:312.4px;top:323.8px;width:246.80000000000007px;height:17.599999999999966px;border:1px solid #e5b53a;background:#fde39c"></div>
<div class="a" style="left:312.8px;top:342.49999999999994px;width:681.8px;height:0.8000000000000114px;background:#e6e6e6"></div>
<svg class="a" style="left:319.8px;top:330.60px" width="8" height="3.5" viewBox="0 0 8 3.5"><rect x="0.5" y="0.5" width="7" height="2.5" rx="0.6" fill="#8fb0d0" stroke="#4a6a8a" stroke-width="0.8"/></svg>
<div class="a tx" style="left:334.60px;top:328.63px;font-size:10px;line-height:10px;color:#333;font-weight:400;transform:scaleX(0.8630);">По номенклатуре</div>
<div class="a tx" style="left:565.19px;top:328.63px;font-size:10px;line-height:10px;color:#333;font-weight:400;transform:scaleX(0.9138);">Месяц</div>
<div class="a tx" style="left:653.13px;top:328.63px;font-size:10px;line-height:10px;color:#333;font-weight:400;transform:scaleX(0.8712);">Номенклатура</div>
<div class="a" style="left:312.8px;top:362.4px;width:681.8px;height:0.8000000000000114px;background:#e6e6e6"></div>
<svg class="a" style="left:319.8px;top:350.50px" width="8" height="3.5" viewBox="0 0 8 3.5"><rect x="0.5" y="0.5" width="7" height="2.5" rx="0.6" fill="#8fb0d0" stroke="#4a6a8a" stroke-width="0.8"/></svg>
<div class="a tx" style="left:334.60px;top:348.54px;font-size:10px;line-height:10px;color:#333;font-weight:400;transform:scaleX(0.8804);">Продажи категорий номенклатуры (помесячно)</div>
<div class="a tx" style="left:565.19px;top:348.54px;font-size:10px;line-height:10px;color:#333;font-weight:400;transform:scaleX(0.9138);">Месяц</div>
<div class="a tx" style="left:653.12px;top:348.54px;font-size:10px;line-height:10px;color:#333;font-weight:400;transform:scaleX(0.8826);">Категория номенклатуры</div>
<svg class="a" style="left:770.6px;top:325.8px" width="11" height="9" viewBox="0 0 11 9"><path d="M0.8 5.0 L3.7 8.0 L9.4 1.0" fill="none" stroke="#0f5a2a" stroke-width="1.7"/></svg>
<div class="a" style="left:929.4px;top:572px;width:66.20000000000005px;height:14.5px;border:1px solid #a8a8a8;background:#fff"></div>
<div class="a" style="left:945.8px;top:572px;width:1.1000000000000227px;height:14.299999999999955px;background:#a8a8a8"></div>
<div class="a" style="left:962.0px;top:572px;width:1.1000000000000227px;height:14.299999999999955px;background:#a8a8a8"></div>
<div class="a" style="left:979.1px;top:572px;width:1.1000000000000227px;height:14.299999999999955px;background:#a8a8a8"></div>
<svg class="a" style="left:934px;top:576px" width="8" height="6" viewBox="0 0 8 6"><rect x="0.5" y="0" width="7" height="1" fill="#aaa"/><path d="M4 1.5 L7.5 5.5 L0.5 5.5 Z" fill="#aaa"/><path d="M0.5 5 L7.5 5" stroke="#aaa"/></svg>
<svg class="a" style="left:950.5px;top:577px" width="8" height="5" viewBox="0 0 8 5"><path d="M4 0.5 L7.5 4.5 L0.5 4.5 Z" fill="#aaa"/></svg>
<svg class="a" style="left:967px;top:577px" width="8" height="5" viewBox="0 0 8 5"><path d="M4 4.5 L7.5 0.5 L0.5 0.5 Z" fill="#aaa"/></svg>
<svg class="a" style="left:983.5px;top:576px" width="8" height="6" viewBox="0 0 8 6"><path d="M4 4.5 L7.5 0.5 L0.5 0.5 Z" fill="#aaa"/><rect x="0.5" y="5" width="7" height="1" fill="#aaa"/></svg>
<svg class="a" style="left:456.5px;top:329.5px" width="11" height="16" viewBox="0 0 11 16"><path d="M0.6 0.6 L0.6 11.2 L3.0 9.0 L5.0 13.8 L6.8 13.0 L4.9 8.3 L8.0 8.2 Z" fill="#f4f4f4" stroke="#111" stroke-width="1.0" stroke-linejoin="round"/></svg>
</body></html>
